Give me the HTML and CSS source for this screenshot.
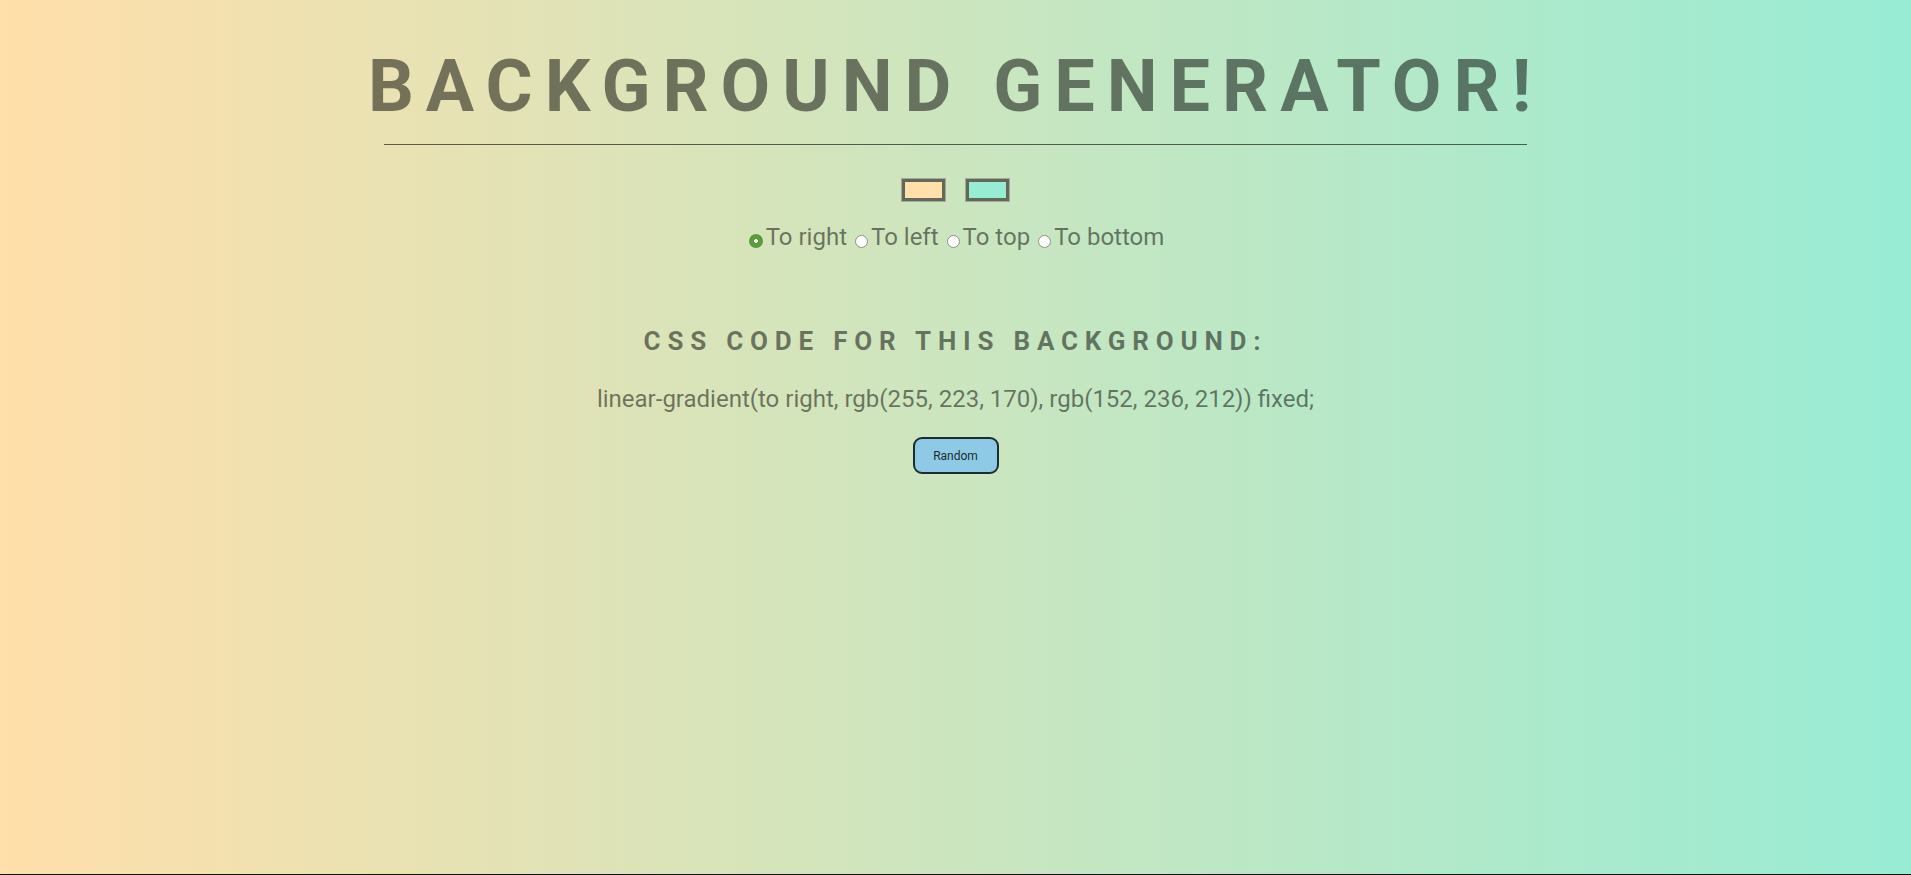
FILE: index.html
```html
<!DOCTYPE html>
<html lang="en">
<head>
<meta charset="utf-8">
<title>Background Generator</title>
<link rel="stylesheet" href="styles.css">
</head>
<body>
  <main class="page">
    <h1 class="title">BACKGROUND GENERATOR!</h1>
    <hr class="rule">
    <div class="colors">
      <span class="swatch swatch-a"></span>
      <span class="swatch swatch-b"></span>
    </div>
    <div class="directions">
      <label class="dir"><input type="radio" name="dir" class="radio" checked>To right</label>
      <label class="dir"><input type="radio" name="dir" class="radio">To left</label>
      <label class="dir"><input type="radio" name="dir" class="radio">To top</label>
      <label class="dir"><input type="radio" name="dir" class="radio">To bottom</label>
    </div>
    <h3 class="subtitle">CSS CODE FOR THIS BACKGROUND:</h3>
    <p class="code">linear-gradient(to right, rgb(255, 223, 170), rgb(152, 236, 212)) fixed;</p>
    <button class="random" type="button">Random</button>
  </main>
</body>
</html>
```
FILE: styles.css
```css
html {
  background: #111;
  height: 100%;
}
body {
  margin: 0;
  height: calc(100% - 1px);
  background: linear-gradient(to right, rgb(255, 223, 170), rgb(152, 236, 212));
  font-family: Roboto, "Liberation Sans", sans-serif;
  color: rgba(0, 0, 0, 0.5);
}
.page {
  display: flex;
  flex-direction: column;
  align-items: center;
  text-align: center;
}
.title {
  margin: 45px 0 0;
  font-size: 72px;
  line-height: 84px;
  font-weight: 700;
  letter-spacing: 12px;
}
.rule {
  width: 1143px;
  margin: 15px 0 0;
  border: 0;
  border-top: 1px solid rgba(0, 0, 0, 0.6);
  height: 0;
}
.colors {
  display: flex;
  gap: 19px;
  margin-top: 33px;
}
.swatch {
  display: block;
  width: 37px;
  height: 16px;
  border: 3px solid #636959;
  box-shadow: 0 0 0 1px #a3aa9c;
  margin: 1px;
}
.swatch-a { background: rgb(255, 223, 170); }
.swatch-b { background: rgb(152, 236, 212); }
.directions {
  margin-top: 21px;
  font-size: 24px;
  line-height: 28px;
  display: flex;
  gap: 6px;
}
.dir {
  white-space: nowrap;
}
.radio {
  appearance: none;
  -webkit-appearance: none;
  width: 13px;
  height: 13px;
  margin: 0 3px 0 2px;
  border: 1px solid #8f8f8f;
  border-radius: 50%;
  background: #fff;
  vertical-align: -3px;
  box-sizing: border-box;
}
.radio:checked {
  border: 0;
  background: radial-gradient(circle, #fff 0 1.6px, #5a9b3a 2.2px);
  width: 14px;
  height: 14px;
}
.subtitle {
  margin: 75px 0 0;
  font-size: 26px;
  line-height: 30px;
  font-weight: 700;
  letter-spacing: 6.8px;
}
.code {
  margin: 29px 0 0;
  font-size: 24px;
  line-height: 28px;
}
.random {
  margin-top: 24px;
  width: 86px;
  height: 37px;
  background: #8ecae6;
  border: 2px solid #1e2b2e;
  border-radius: 9px;
  font-family: Roboto, "Liberation Sans", sans-serif;
  font-size: 12px;
  color: #1c2a30;
  padding: 0;
}
```
